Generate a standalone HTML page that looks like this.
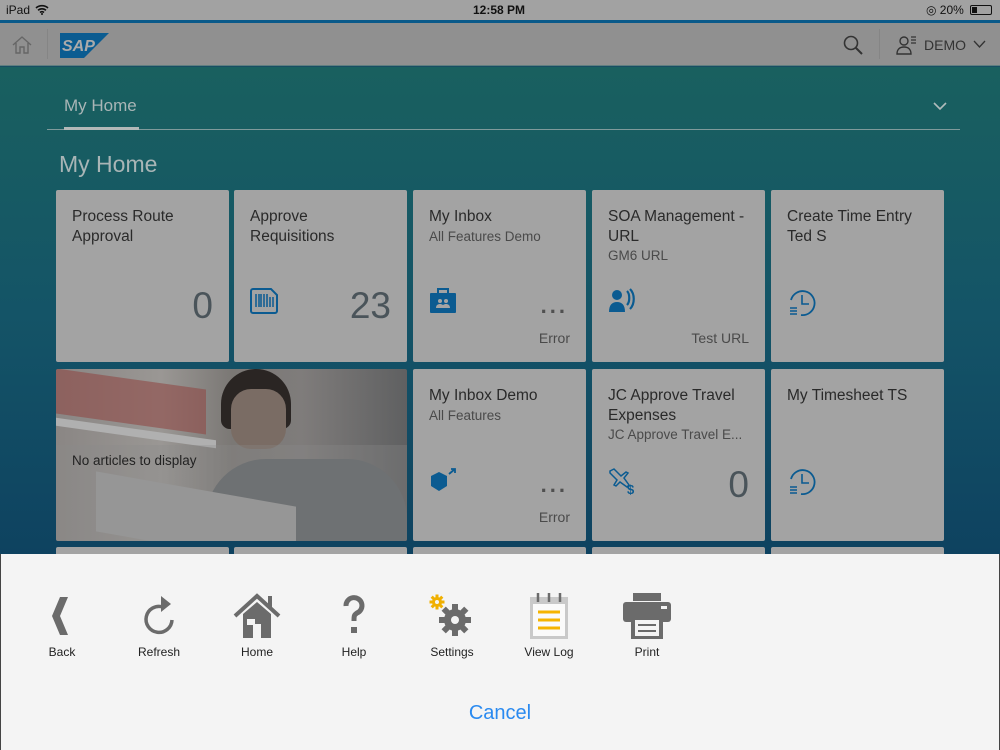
<!DOCTYPE html>
<html><head><style>
*{margin:0;padding:0;box-sizing:border-box}
body{width:1000px;height:750px;overflow:hidden;position:relative;font-family:"Liberation Sans",sans-serif;background:#174e63}
.status{position:absolute;left:0;top:0;width:1000px;height:20px;background:#a2a2a2;font-size:12px;color:#111}
.blue{position:absolute;top:20px;left:0;width:1000px;height:3px;background:#0a5a8a}
.hdr{position:absolute;top:23px;left:0;width:1000px;height:43px;background:#909090;border-bottom:1px solid #5f7f80}
.main{position:absolute;top:67px;left:0;width:1000px;height:490px;background:linear-gradient(#19605f,#145467 50%,#0e4260)}
.tile{position:absolute;width:173px;height:172px;background:#a3a3a3;border-radius:2px;color:#2a2a2a}
.t1{position:absolute;left:16px;top:17px;font-size:15.5px;line-height:20px}
.t2{position:absolute;left:16px;font-size:13.5px;color:#4a4a4a}
.num{position:absolute;right:16px;top:95px;font-size:37px;color:#4a545a}
.ft{position:absolute;right:16px;bottom:16px;font-size:14px;color:#4a4a4a}
.dots{position:absolute;right:18px;top:103px;font-size:22px;letter-spacing:3px;color:#505050;font-weight:bold}
.ic{position:absolute;left:16px;top:98px}
.sheet{position:absolute;top:554px;left:0;width:1000px;height:196px;background:#f4f4f4;border-left:1px solid #444;border-right:1px solid #444}
.btn{position:absolute;top:38px;width:80px;text-align:center;font-size:12px;color:#222}
.btn svg{display:block;margin:0 auto 5px}
</style></head><body>
<div class="status"><span style="position:absolute;left:6px;top:3px">iPad</span>
<svg style="position:absolute;left:35px;top:4px" width="14" height="11" viewBox="0 0 14 11"><path d="M1 4a9 9 0 0 1 12 0M3 6.3a6 6 0 0 1 8 0M5 8.5a3 3 0 0 1 4 0" stroke="#111" stroke-width="1.6" fill="none"/><circle cx="7" cy="10" r="1" fill="#111"/></svg>
<span style="position:absolute;left:473px;top:3px;font-weight:bold">12:58 PM</span>
<span style="position:absolute;left:926px;top:3px">◎ 20%</span>
<div style="position:absolute;left:970px;top:5px;width:22px;height:10px;border:1px solid #111;border-radius:2px"><div style="width:5px;height:6px;margin:1px;background:#111"></div></div></div>
<div class="blue"></div>
<div class="hdr">
<svg style="position:absolute;left:11px;top:12px" width="22" height="20" viewBox="0 0 22 20"><path d="M2 10L11 2l9 8M5 8v10h4v-6h4v6h4V8" stroke="#666" stroke-width="1.4" fill="none"/></svg>
<div style="position:absolute;left:47px;top:6px;width:1px;height:30px;background:#858585"></div>
<svg style="position:absolute;left:60px;top:10px" width="49" height="25" viewBox="0 0 49 25"><path d="M0 0h49L24 25H0z" fill="#0b5c91"/><text x="2" y="18" font-family="Liberation Sans" font-weight="bold" font-size="16" fill="#aaa" font-style="italic">SAP</text></svg>
<svg style="position:absolute;left:843px;top:12px" width="20" height="20" viewBox="0 0 20 20"><circle cx="8" cy="8" r="6.5" stroke="#333" stroke-width="1.6" fill="none"/><path d="M13 13l6 6" stroke="#333" stroke-width="2"/></svg>
<div style="position:absolute;left:879px;top:6px;width:1px;height:30px;background:#858585"></div>
<svg style="position:absolute;left:896px;top:12px" width="22" height="20" viewBox="0 0 22 20"><circle cx="8" cy="6" r="4" stroke="#333" stroke-width="1.4" fill="none"/><path d="M1 19c0-5 3-7 7-7s7 2 7 7z" stroke="#333" stroke-width="1.4" fill="none"/><path d="M15 2h5M15 5h5M15 8h5" stroke="#333" stroke-width="1.2"/></svg>
<span style="position:absolute;left:924px;top:14px;font-size:14px;color:#333">DEMO</span>
<svg style="position:absolute;left:973px;top:17px" width="13" height="9"><path d="M1 1l5.5 6L12 1" stroke="#333" stroke-width="1.3" fill="none"/></svg>
</div>
<div class="main">
<div style="position:absolute;left:64px;top:29px;font-size:17px;color:#a9b5b6">My Home</div>
<div style="position:absolute;left:47px;top:62px;width:913px;height:1px;background:#7f9a9b"></div>
<div style="position:absolute;left:64px;top:60px;width:75px;height:3px;background:#b2b8b8"></div>
<svg style="position:absolute;left:933px;top:35px" width="14" height="9"><path d="M1 1l6 6 6-6" stroke="#b0bcbc" stroke-width="1.6" fill="none"/></svg>
<div style="position:absolute;left:59px;top:84px;font-size:23px;color:#a9b5b6">My Home</div>
</div>
<div class="tile" style="left:56px;top:190px"><div class="t1">Process Route<br>Approval</div><div class="num">0</div></div>
<div class="tile" style="left:234px;top:190px"><div class="t1">Approve<br>Requisitions</div>
<svg class="ic" width="28" height="26" viewBox="0 0 28 26"><path d="M3 1h18l6 6v16a2 2 0 0 1-2 2H3a2 2 0 0 1-2-2V3a2 2 0 0 1 2-2z" fill="none" stroke="#0b5b91" stroke-width="2"/><path d="M6 6v13M9 6v13M11 6v13M14 6v13M17 6v13M20 9v10M23 9v10" stroke="#0b5b91" stroke-width="1.5"/></svg>
<div class="num">23</div></div>
<div class="tile" style="left:413px;top:190px"><div class="t1">My Inbox</div><div class="t2" style="top:39px">All Features Demo</div>
<svg class="ic" width="28" height="26" viewBox="0 0 28 26"><path d="M9 5V1h10v4" stroke="#0b5b91" stroke-width="2" fill="none"/><rect x="1" y="5" width="26" height="20" rx="1" fill="#0b5b91"/><circle cx="11" cy="13" r="2" fill="#a4a4a4"/><circle cx="17" cy="13" r="2" fill="#a4a4a4"/><path d="M7 20c0-3 2-4 4-4s4 1 4 4zM13 20c0-3 2-4 4-4s4 1 4 4z" fill="#a4a4a4"/></svg>
<div class="dots">...</div><div class="ft">Error</div></div>
<div class="tile" style="left:592px;top:190px"><div class="t1">SOA Management -<br>URL</div><div class="t2" style="top:58px">GM6 URL</div>
<svg class="ic" width="28" height="26" viewBox="0 0 28 26"><circle cx="9" cy="7" r="5" fill="#0b5b91"/><path d="M1 24c0-7 3-10 8-10s8 3 8 10z" fill="#0b5b91"/><path d="M19 3c3 3 3 11 0 14M22 1c5 5 5 15 0 20" stroke="#0b5b91" stroke-width="2.2" fill="none"/></svg>
<div class="ft">Test URL</div></div>
<div class="tile" style="left:771px;top:190px"><div class="t1">Create Time Entry<br>Ted S</div>
<svg class="ic" width="30" height="30" viewBox="0 0 30 30"><path d="M4 12A12 12 0 1 1 14 27" stroke="#0b5b91" stroke-width="1.8" fill="none"/><path d="M15 7v9h7M3 20h7M3 23h7M3 26h7" stroke="#0b5b91" stroke-width="1.6" fill="none"/></svg></div>
<div class="tile" style="left:56px;top:369px;width:351px;background:linear-gradient(90deg,#8a8684 0%,#9a9794 30%,#7b7875 50%,#7f7c7b 70%,#5f6061 100%);overflow:hidden">
<div style="position:absolute;left:0;top:10px;width:150px;height:45px;background:#8f4a46;opacity:.6;transform:skewY(8deg)"></div>
<div style="position:absolute;left:0;top:60px;width:160px;height:8px;background:#b0b0b0;transform:skewY(8deg)"></div>
<div style="position:absolute;left:165px;top:0;width:70px;height:60px;background:#2a2523;border-radius:40px 40px 10px 10px"></div>
<div style="position:absolute;left:175px;top:20px;width:55px;height:60px;background:#7a6c64;border-radius:20px"></div>
<div style="position:absolute;left:150px;top:90px;width:201px;height:90px;background:#626669;border-radius:60px 60px 0 0"></div>
<div style="position:absolute;left:40px;top:120px;width:200px;height:60px;background:#9b9b9b;transform:skewY(10deg)"></div>
<div style="position:absolute;left:0;top:76px;width:351px;height:96px;background:rgba(140,140,140,.3)"></div>
<div style="position:absolute;left:16px;top:84px;font-size:13.5px;color:#222">No articles to display</div></div>
<div class="tile" style="left:413px;top:369px"><div class="t1">My Inbox Demo</div><div class="t2" style="top:39px">All Features</div>
<svg class="ic" width="30" height="28" viewBox="0 0 30 28"><path d="M2 9l8-4 8 4v10l-8 5-8-5z" fill="#0b5b91"/><path d="M20 7l6-5M22 2h4v4" stroke="#0b5b91" stroke-width="1.8" fill="none"/></svg>
<div class="dots">...</div><div class="ft">Error</div></div>
<div class="tile" style="left:592px;top:369px"><div class="t1">JC Approve Travel<br>Expenses</div><div class="t2" style="top:58px">JC Approve Travel E...</div>
<svg class="ic" width="30" height="28" viewBox="0 0 30 28"><path d="M2 4l4-2 7 7 5-4 2 1-4 5 5 7-2 2-7-5-4 4-2-1 3-5-7-7z" stroke="#0b5b91" stroke-width="1.5" fill="none"/><text x="19" y="27" font-size="13" font-weight="bold" fill="#0b5b91" font-family="Liberation Sans">$</text></svg>
<div class="num">0</div></div>
<div class="tile" style="left:771px;top:369px"><div class="t1">My Timesheet TS</div>
<svg class="ic" width="30" height="30" viewBox="0 0 30 30"><path d="M4 12A12 12 0 1 1 14 27" stroke="#0b5b91" stroke-width="1.8" fill="none"/><path d="M15 7v9h7M3 20h7M3 23h7M3 26h7" stroke="#0b5b91" stroke-width="1.6" fill="none"/></svg></div>
<div class="tile" style="left:56px;top:547px;height:10px"></div>
<div class="tile" style="left:234px;top:547px;height:10px"></div>
<div class="tile" style="left:413px;top:547px;height:10px"></div>
<div class="tile" style="left:592px;top:547px;height:10px"></div>
<div class="tile" style="left:771px;top:547px;height:10px"></div>
<div class="sheet">
<div class="btn" style="left:21px"><svg width="40" height="48" viewBox="0 0 40 48"><path d="M26 5h-8L10 24l8 19h8L18 24z" fill="#6b6b6b"/></svg>Back</div>
<div class="btn" style="left:118px"><svg width="40" height="48" viewBox="0 0 40 48"><path d="M24 15A13 13 0 1 0 33 28" stroke="#6b6b6b" stroke-width="3.5" fill="none"/><path d="M22 4l10 8-10 8z" fill="#6b6b6b"/></svg>Refresh</div>
<div class="btn" style="left:216px"><svg width="50" height="48" viewBox="0 0 50 48"><path d="M3 24L25 4l22 20" stroke="#6b6b6b" stroke-width="4" fill="none"/><rect x="36" y="4" width="4" height="12" fill="#6b6b6b"/><path d="M11 22l14-12 14 12v24H29V32h-8v14H11z" fill="#6b6b6b"/><rect x="15" y="27" width="8" height="6" fill="#f4f4f4"/></svg>Home</div>
<div class="btn" style="left:313px"><svg width="40" height="48" viewBox="0 0 40 48"><path d="M12 14a8 8 0 1 1 11 7c-3 2-3 3-3 8" stroke="#6b6b6b" stroke-width="5" fill="none"/><rect x="17" y="35" width="6" height="6" fill="#6b6b6b"/></svg>Help</div>
<div class="btn" style="left:411px"><svg width="50" height="48" viewBox="0 0 50 48"><g transform="translate(28,28)"><circle r="11" fill="#6b6b6b"/><g fill="#6b6b6b"><rect x="-3" y="-16" width="6" height="32"/><rect x="-16" y="-3" width="32" height="6"/><rect x="-3" y="-16" width="6" height="32" transform="rotate(45)"/><rect x="-3" y="-16" width="6" height="32" transform="rotate(-45)"/></g><circle r="4" fill="#f4f4f4"/></g><g transform="translate(10,10)"><circle r="5" fill="#f0b000"/><g fill="#f0b000"><rect x="-1.5" y="-7.5" width="3" height="15"/><rect x="-7.5" y="-1.5" width="15" height="3"/><rect x="-1.5" y="-7.5" width="3" height="15" transform="rotate(45)"/><rect x="-1.5" y="-7.5" width="3" height="15" transform="rotate(-45)"/></g><circle r="2" fill="#f4f4f4"/></g></svg>Settings</div>
<div class="btn" style="left:508px"><svg width="44" height="48" viewBox="0 0 44 48"><rect x="3" y="5" width="38" height="42" fill="#c9c9c9"/><rect x="6" y="12" width="32" height="32" fill="#fafafa"/><path d="M11 1v9M22 1v9M33 1v9" stroke="#6b6b6b" stroke-width="2.5"/><path d="M11 20h22M11 28h22M11 36h22" stroke="#f5b400" stroke-width="3"/></svg>View Log</div>
<div class="btn" style="left:606px"><svg width="52" height="48" viewBox="0 0 52 48"><rect x="12" y="1" width="28" height="8" fill="#6b6b6b"/><rect x="2" y="10" width="48" height="20" rx="3" fill="#6b6b6b"/><rect x="40" y="14" width="6" height="3" fill="#f4f4f4"/><rect x="10" y="24" width="32" height="23" fill="#6b6b6b"/><rect x="14" y="28" width="24" height="16" fill="#f4f4f4"/><path d="M17 33h18M17 39h18" stroke="#6b6b6b" stroke-width="2"/></svg>Print</div>
<div style="position:absolute;left:0;width:998px;top:148px;text-align:center;font-size:20px;color:#2a8af0">Cancel</div>
</div>
</body></html>
